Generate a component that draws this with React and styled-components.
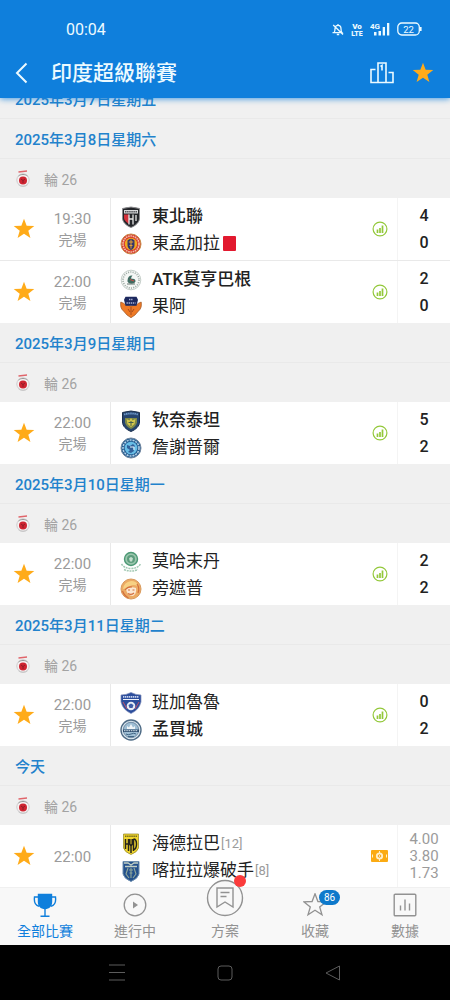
import React from "react";
import styled, { createGlobalStyle, css } from "styled-components";

const color = {
  blue: "#0f7fdc",
  link: "#2282cc",
  star: "#ffab19",
  grey: "#9b9b9b",
  panel: "#f0f0f0",
  line: "#e9e9e9",
  ink: "#222222",
};

const GlobalStyle = createGlobalStyle`
  * { box-sizing: border-box; }
  body {
    margin: 0;
    background: ${color.panel};
    font-family: Roboto, "Noto Sans CJK TC", sans-serif;
    color: ${color.ink};
  }
  button { font: inherit; color: inherit; background: none; border: 0; padding: 0; cursor: pointer; }
  h1, h2, p, ul { margin: 0; padding: 0; font-weight: inherit; font-size: inherit; }
  ul { list-style: none; }
  svg { display: block; flex: none; }
`;

const Screen = styled.div`
  height: 100vh;
  display: flex;
  flex-direction: column;
  overflow: hidden;
`;

/* ---------- header ---------- */

const Header = styled.header`
  position: relative;
  z-index: 2;
  flex: none;
  background: ${color.blue};
  color: #ecfaff;
  box-shadow: 0 1px 6px rgba(15, 127, 220, 0.75);
`;

const StatusBar = styled.div`
  height: 48px;
  padding: 10px 28px 0 66px;
  display: flex;
  align-items: center;
  justify-content: space-between;
  font-size: 16px;
`;

const StatusIcons = styled.div`
  display: flex;
  align-items: center;
  gap: 7px;
`;

const TitleBar = styled.div`
  height: 50px;
  padding: 0 16px 0 15px;
  display: flex;
  align-items: center;
`;

const Title = styled.h1`
  flex: 1;
  margin-left: 22px;
  font-size: 21px;
  line-height: 32px;
  font-weight: 500;
`;

const IconButton = styled.button`
  display: flex;
  align-items: center;
  justify-content: center;
  & + & { margin-left: 18px; }
`;

/* ---------- match list ---------- */

const List = styled.main`
  flex: 1;
  min-height: 0;
  margin-top: -19px;
  overflow: hidden;
`;

const DateRow = styled.h2`
  height: 40px;
  padding: 0 15px;
  display: flex;
  align-items: center;
  background: ${color.panel};
  border-bottom: 1px solid ${color.line};
  color: ${color.link};
  font-size: 15px;
  font-weight: 500;
`;

const RoundRow = styled.p`
  height: 39px;
  padding: 0 14px;
  display: flex;
  align-items: center;
  gap: 12px;
  background: ${color.panel};
  color: #a3a3a3;
  font-size: 14px;
`;

const Matches = styled.ul`
  background: #fff;
  li + li { border-top: 1px solid ${color.line}; }
`;

const Match = styled.li`
  display: grid;
  grid-template-columns: 48px 63px 1fr 52px;
`;

const StarButton = styled.button`
  display: flex;
  align-items: center;
  justify-content: center;
`;

const Kickoff = styled.div`
  height: 62px;
  padding: 2px 13px 0 0;
  display: flex;
  flex-direction: column;
  align-items: center;
  justify-content: center;
  border-right: 1px solid ${color.line};
  color: ${color.grey};
  font-size: 15px;
  line-height: 21px;
  small { font-size: 14px; }
`;

const Body = styled.div`
  display: flex;
  align-items: center;
  justify-content: space-between;
  padding: 0 9px;
  border-right: 1px solid #f4f4f4;
`;

const Teams = styled.div`
  padding-top: 2px;
`;

const Team = styled.div`
  height: 27px;
  display: flex;
  align-items: center;
  font-size: 17px;
  line-height: 27px;
  white-space: nowrap;
  font-weight: ${(p) => (p.$winner ? 500 : 400)};
  svg { margin-right: 10px; }
`;

const Rank = styled.span`
  margin-left: 1px;
  font-size: 13px;
  color: ${color.grey};
`;

const RedCard = styled.span`
  width: 13px;
  height: 15px;
  margin-left: 3px;
  border-radius: 1px;
  background: #e2192f;
`;

const Scores = styled.div`
  display: flex;
  flex-direction: column;
  align-items: center;
  justify-content: center;
  ${(p) =>
    p.$odds
      ? css`
          color: ${color.grey};
          font-size: 15px;
          line-height: 17px;
        `
      : css`
          font-size: 16px;
          line-height: 27px;
          font-weight: 500;
        `}
`;

/* ---------- bottom bars ---------- */

const TabBar = styled.nav`
  position: relative;
  z-index: 1;
  flex: none;
  height: 57px;
  display: grid;
  grid-template: 57px / repeat(5, 1fr);
  background: #f8f8f8;
`;

const Tab = styled.button`
  display: flex;
  flex-direction: column;
  align-items: center;
  justify-content: flex-end;
  padding-bottom: 4px;
  font-size: 14px;
  line-height: 20px;
  color: ${(p) => (p.$active ? color.blue : "#929292")};
`;

const TabIcon = styled.span`
  position: relative;
  margin-bottom: 4px;
`;

const CountBadge = styled.span`
  position: absolute;
  top: -3px;
  left: 16px;
  width: 21px;
  height: 15px;
  border-radius: 8px;
  background: #0e79cb;
  color: #fff;
  font-size: 10px;
  line-height: 15px;
  text-align: center;
`;

const DotBadge = styled.span`
  position: absolute;
  top: -4px;
  right: -2px;
  width: 12px;
  height: 12px;
  border-radius: 50%;
  background: #fb3b3b;
`;

const SystemBar = styled.footer`
  flex: none;
  height: 55px;
  display: flex;
  align-items: center;
  justify-content: center;
  gap: 92px;
  background: #000;
`;

/* ---------- icons ---------- */

const STAR = "M12 .8l2.900 7.700 8.300.3-6.500 5.100 2.300 7.900L12 17.300l-7 4.500 2.300-7.900L.8 8.800l8.300-.3z";

const StarIcon = () => (
  <svg width="22" height="22" viewBox="0 0 24 24">
    <path d={STAR} fill={color.star} />
  </svg>
);

const ChevronIcon = () => (
  <svg width="14" height="22" viewBox="0 0 14 22" fill="none" stroke="currentColor" strokeWidth="2">
    <path d="M11.5 1.5L2 11l9.5 9.5" />
  </svg>
);

const PodiumIcon = () => (
  <svg width="24" height="22" viewBox="0 0 24 22" fill="none" stroke="currentColor" strokeWidth="1.6">
    <path d="M8 20.5V1h8v19.5M5.500 7.500H1v13h22v-10h-4.500M10.500 4.500L12 3.500v5" />
  </svg>
);

const MutedIcon = () => (
  <svg width="12" height="13" viewBox="0 0 12 13" fill="none" stroke="currentColor" strokeWidth="1.3">
    <path d="M2 9.700c1-1 1-2 1-4C3 3.500 4.300 2.300 6 2.300s3 1.200 3 3.400c0 2 0 3 1 4zM6 1v1.500M4.800 11.500h2.400M1.200 2l9.800 9.500M.5 9.700h2" />
  </svg>
);

const VolteIcon = () => (
  <svg width="12" height="15" viewBox="0 0 12 15" fill="currentColor" fontFamily="Roboto" fontWeight="900">
    <text x="6" y="7" fontSize="8" textAnchor="middle">Vo</text>
    <text x="6" y="14" fontSize="7" textAnchor="middle">LTE</text>
  </svg>
);

const SignalIcon = () => (
  <svg width="20" height="14" viewBox="0 0 20 14" fill="currentColor">
    <text x="0" y="7" fontFamily="Roboto" fontWeight="700" fontSize="8">4G</text>
    <path d="M4 10h2.500v3.500H4zM8.500 9H11v4.500H8.500zM12.700 5h2.300v8.500h-2.300zM17 1h2.300v12.500H17z" />
  </svg>
);

const BatteryIcon = () => (
  <svg width="25" height="14" viewBox="0 0 25 14" fill="none" stroke="currentColor" strokeWidth="1.3">
    <rect x="0.800" y="1" width="21.500" height="12" rx="4" />
    <path d="M23.700 5v4" strokeWidth="1.800" />
    <text x="11.500" y="10.500" fontFamily="Roboto" fontSize="9.500" fill="currentColor" stroke="none" textAnchor="middle">22</text>
  </svg>
);

const StatsIcon = () => (
  <svg width="16" height="16" viewBox="0 0 16 16" fill="none" stroke="#93c83a">
    <circle cx="8" cy="8" r="6.900" strokeWidth="1.200" />
    <path d="M5.500 12V8.500M8 12V7M10.500 12V4.500" strokeWidth="1.700" />
  </svg>
);

const TicketIcon = () => (
  <svg width="17" height="12" viewBox="0 0 17 12">
    <rect width="17" height="12" rx="1" fill="#fbab13" />
    <path d="M1.500 4.500v3M15.500 4.500v3" stroke="#fff3cf" />
    <circle cx="8.500" cy="6" r="3.600" fill="#fff0cc" />
    <circle cx="8.500" cy="6" r="1.300" fill="none" stroke="#f2a013" />
    <path d="M8.500 1v2M8.500 9v2" stroke="#fff0cc" />
  </svg>
);

const TrophyIcon = () => (
  <svg width="24" height="24" viewBox="0 0 24 24" fill="none" stroke="currentColor" strokeWidth="1.400">
    <path d="M4.800.8h14.400v8c0 4.400-2.700 7.400-7.200 7.400s-7.200-3-7.200-7.400z" fill="currentColor" stroke="none" />
    <path d="M5 4H1.500c-.5 4 .3 8.300 4.500 9.300M19 4h3.500c.5 4-.3 8.300-4.500 9.300M12 16v7M7.500 23.200h9" />
  </svg>
);

const PlayIcon = () => (
  <svg width="24" height="24" viewBox="0 0 24 24">
    <circle cx="12" cy="12" r="10.800" fill="none" stroke="currentColor" strokeWidth="1.300" />
    <path d="M10 8.500l5 3.500-5 3.500z" fill="currentColor" />
  </svg>
);

const PlanIcon = () => (
  <svg width="38" height="38" viewBox="0 0 38 38" fill="none" stroke="currentColor" strokeWidth="1.400">
    <circle cx="19" cy="19" r="17.500" fill="#f8f8f8" />
    <path d="M11 9h16v19l-8-5-8 5zM14.500 13.500h9M14.500 17.500h6" />
  </svg>
);

const StarOutlineIcon = () => (
  <svg width="24" height="24" viewBox="0 0 24 24" fill="none" stroke="currentColor" strokeWidth="1.300">
    <path d={STAR} />
  </svg>
);

const ChartIcon = () => (
  <svg width="24" height="24" viewBox="0 0 24 24" fill="none" stroke="currentColor" strokeWidth="1.400">
    <rect x="1.200" y="1.200" width="21.600" height="21.600" rx="1" />
    <path d="M7.500 17.500v-5M12 17.500v-11M16.500 17.500v-7" />
  </svg>
);

const MenuKey = () => (
  <svg width="16" height="17" viewBox="0 0 16 17" stroke="#5c5c5c">
    <path d="M0 1h16M0 8.500h16M0 16h16" />
  </svg>
);

const HomeKey = () => (
  <svg width="16" height="16" viewBox="0 0 16 16" fill="none" stroke="#5c5c5c">
    <rect x="1" y="1" width="14" height="14" rx="3" />
  </svg>
);

const BackKey = () => (
  <svg width="16" height="16" viewBox="0 0 16 16" fill="none" stroke="#5c5c5c" strokeLinejoin="round">
    <path d="M14.500 1v14L1 8z" />
  </svg>
);

const LeagueIcon = () => (
  <svg width="18" height="18" viewBox="0 0 18 18">
    <path d="M4.500 2L13 1" stroke="#e0656b" strokeWidth="1.500" />
    <circle cx="9" cy="10" r="6.200" fill="#f6f2f2" stroke="#c4c1c4" strokeWidth=".8" />
    <path d="M4.500 6c2.500-2 6.500-2 9 0" stroke="#999" fill="none" />
    <circle cx="9" cy="10.500" r="4" fill="#cf2431" />
    <path d="M7 9l2 1.500L11 9M9 10.500v2.500" stroke="#7d1a25" strokeWidth=".8" fill="none" />
    <path d="M4.500 14.800c2.500 2 6.500 2 9 0" stroke="#c6c6c6" fill="none" />
  </svg>
);

/* ---------- club crests ---------- */

const SHIELD = "M2.500 2.500Q11 -.5 19.500 2.500V12c0 4-3.500 7.500-8.500 9.500C6 19.500 2.500 16 2.500 12z";

const crests = {
  northeast: (
    <>
      <path d={SHIELD} fill="#24262a" stroke="#8d8d90" />
      <path d="M4 4h14v3.500H4z" fill="#d9dadc" />
      <path d="M5 5.800h12" stroke="#55565a" strokeWidth="1.500" strokeDasharray="1.500 .6" />
      <path d="M4 8.500h5v9.500c-3-2-5-4-5-6z" fill="#d4323c" />
      <path d="M9 8.500v10M13 8.500v10M9 13h4M16 9v6" stroke="#e8e8e8" strokeWidth="1.300" />
    </>
  ),
  eastBengal: (
    <>
      <circle cx="11" cy="11" r="10" fill="#d8352f" stroke="#c98b48" />
      <circle cx="11" cy="11" r="8" fill="none" stroke="#f1c4a5" strokeWidth="1.600" strokeDasharray="1.600 .7" />
      <circle cx="11" cy="11" r="6.200" fill="#f1a81f" />
      <path d="M7.500 7.500Q11 4 14.500 7.500V12q0 3.500-3.500 5-3.500-1.500-3.500-5z" fill="#34366c" />
      <path d="M11 6.500v9M8.800 9h4.400M9.500 12.500h3" stroke="#e5a13a" />
    </>
  ),
  mohunBagan: (
    <>
      <circle cx="11" cy="11" r="9.800" fill="#f5f7f5" stroke="#c7d0cb" />
      <circle cx="11" cy="11" r="8" fill="none" stroke="#9aa7a1" strokeWidth="1.600" strokeDasharray="1 1.300" />
      <path d="M7.500 11.500Q8 6 12.500 6.500q-2 1.500-1 3.500c3-.5 4 .5 4 2.500-1.500 3-6.500 3-8 0z" fill="#3f6c61" />
      <path d="M10 10.500l4 1.500" stroke="#c24c46" strokeWidth="1.300" />
      <path d="M7 15h8" stroke="#66756e" />
    </>
  ),
  goa: (
    <>
      <path d="M.8 6q3 1 5 3l5.200 1 5.200-1q2-2 5-3 1 6-2.700 9l-3.500 4-4 2.700L7 19l-3.500-4Q-.2 12 .8 6z" fill="#ee7a26" stroke="#9c5424" strokeWidth=".7" />
      <path d="M5.500 .8h11l1.500 3-1.500 6h-11L4 3.800z" fill="#1c285e" />
      <path d="M6.500 7h9M9 3.500h4" stroke="#a9b1d5" strokeWidth="1.600" strokeDasharray="1.400 .7" />
      <path d="M11 11v8M8 13l2 3M14 13l-2 3" stroke="#a74c1e" />
    </>
  ),
  chennaiyin: (
    <>
      <path d={SHIELD} fill="#26456f" stroke="#1b304e" />
      <path d="M4 4.500q7-2 14 0" stroke="#6f99ca" strokeWidth="1.800" fill="none" strokeDasharray="1.500 .6" />
      <path d="M5 8h12v4.500q-1 4-6 6.500-5-2.500-6-6.500z" fill="#7d8948" />
      <path d="M6.500 9l3 1.500L11 8l1.500 2.500 3-1.500-1 5-3.500 3-3.500-3z" fill="#d6c94b" />
      <path d="M8.500 12.500h5M11 11v5" stroke="#46614e" />
    </>
  ),
  jamshedpur: (
    <>
      <circle cx="11" cy="11" r="10" fill="#275f93" stroke="#70869f" />
      <circle cx="11" cy="11" r="8" fill="none" stroke="#b7d2e7" strokeWidth="1.500" strokeDasharray="2 1" />
      <circle cx="11" cy="11" r="6.300" fill="#68bde6" />
      <path d="M7 8l3 1 3-2 2 2-2 2 1 3-3 2-3-1 2-2-3-2z" fill="#315f99" />
      <path d="M10 10h4v3" stroke="#e3f1f8" fill="none" />
    </>
  ),
  mohammedan: (
    <>
      <circle cx="11" cy="8" r="6.500" fill="#9bc7ad" stroke="#4c9875" strokeWidth="1.400" />
      <circle cx="11" cy="8" r="4" fill="#5d9d7e" />
      <path d="M9 7.500q2-3 4 0l-1 3h-2z" fill="#c5dfcf" />
      <path d="M1.500 13q3 4.500 9.500 4.500T20.500 13M4 18.500q7 3 14 0" fill="none" stroke="#a3c9b4" strokeWidth="1.500" strokeDasharray="2 .8" />
    </>
  ),
  punjab: (
    <>
      <circle cx="11" cy="11" r="10" fill="#ecab64" stroke="#d99a5d" />
      <path d="M3 11q1-7 8-8 6 0 7 5-5-2-8 0-3 3-7 3z" fill="#f7d184" />
      <path d="M6 11q5-3 10-1 1 5-3 8-6 0-7-7z" fill="#fbe7d2" />
      <path d="M5 12q3-4 7-3M8 12h2M12.500 12h2M8 15.500q3 2 6-.5M2.500 13q2 5 6 7M17 6q3 4 1 9" fill="none" stroke="#d36f3d" strokeWidth="1.200" />
    </>
  ),
  bengaluru: (
    <>
      <path d="M1 3q5 0 10-2.500Q16 3 21 3v7q-2 8-10 11.500Q3 18 1 10z" fill="#2b4d9c" stroke="#7d8bb8" strokeWidth=".7" />
      <path d="M3 4.800h16" stroke="#c9d4ee" strokeWidth="1.800" strokeDasharray="1.400 .6" />
      <path d="M3 7.500h16" stroke="#f0f3fa" />
      <circle cx="11" cy="14" r="4.300" fill="#e7ebf4" />
      <path d="M8.500 13l2.500-1.500 2.500 1.500-1 3h-3z" fill="#3d5da8" />
      <path d="M3 10l4 7M19 10l-4 7" stroke="#d65464" strokeWidth=".9" />
    </>
  ),
  mumbai: (
    <>
      <circle cx="11" cy="11" r="10" fill="#d9e6ee" stroke="#4f6c86" strokeWidth="1.400" />
      <circle cx="11" cy="11" r="7.700" fill="#9fbfd5" stroke="#738da5" />
      <path d="M3 10.500h16v2.500H3z" fill="#2f4f70" />
      <path d="M4 11.700h14" stroke="#dce8ef" strokeDasharray="1.500 .8" />
      <path d="M7 10V7l2 1.500L11 5l2 3.500L15 7v3z" fill="#f1f5f7" />
      <path d="M6 15q2 1.500 5 0t5 0M8 17.500h6" stroke="#426785" fill="none" />
    </>
  ),
  hyderabad: (
    <>
      <path d="M3.500 1h15v14q-1 4-7.500 6.500Q4.500 19 3.500 15z" fill="#f0d52d" stroke="#8e8325" strokeWidth=".7" />
      <path d="M5 3.200h12" stroke="#766d20" strokeWidth="1.500" strokeDasharray="1.500 .6" />
      <path d="M5.500 6v10M8.500 6v12M5.500 11h3M9.800 6v5l1.200 2 1.200-2V6M11 13v7M13.500 6v12M13.500 6q3 0 3 5t-3 6" stroke="#25241d" strokeWidth="1.500" fill="none" />
    </>
  ),
  kerala: (
    <>
      <path d="M3 1.500h16V14q-1 4.500-8 7.500-7-3-8-7.500z" fill="#24518b" stroke="#6d8eaf" />
      <path d="M4 3h4l3 2 3-2h4M5 6.500h12" fill="none" stroke="#c2d0c5" strokeWidth="1.300" />
      <path d="M8 8l-2 6 3 4M14 8l2 6-3 4M9 10h4M9.500 13h3M11 8v10" fill="none" stroke="#91a89b" strokeWidth="1.100" />
    </>
  ),
};

const Crest = ({ club }) => (
  <svg width="22" height="22" viewBox="0 0 22 22" fill="none">
    {crests[club]}
  </svg>
);

/* ---------- data ---------- */

const days = [
  {
    date: "2025年3月8日星期六",
    matches: [
      {
        time: "19:30",
        teams: [
          { club: "northeast", name: "東北聯", winner: true },
          { club: "eastBengal", name: "東孟加拉", redCard: true },
        ],
        scores: [4, 0],
      },
      {
        time: "22:00",
        teams: [
          { club: "mohunBagan", name: "ATK莫亨巴根", winner: true },
          { club: "goa", name: "果阿" },
        ],
        scores: [2, 0],
      },
    ],
  },
  {
    date: "2025年3月9日星期日",
    matches: [
      {
        time: "22:00",
        teams: [
          { club: "chennaiyin", name: "钦奈泰坦", winner: true },
          { club: "jamshedpur", name: "詹謝普爾" },
        ],
        scores: [5, 2],
      },
    ],
  },
  {
    date: "2025年3月10日星期一",
    matches: [
      {
        time: "22:00",
        teams: [
          { club: "mohammedan", name: "莫哈末丹" },
          { club: "punjab", name: "旁遮普" },
        ],
        scores: [2, 2],
      },
    ],
  },
  {
    date: "2025年3月11日星期二",
    matches: [
      {
        time: "22:00",
        teams: [
          { club: "bengaluru", name: "班加魯魯" },
          { club: "mumbai", name: "孟買城", winner: true },
        ],
        scores: [0, 2],
      },
    ],
  },
  {
    date: "今天",
    matches: [
      {
        time: "22:00",
        teams: [
          { club: "hyderabad", name: "海德拉巴", rank: 12 },
          { club: "kerala", name: "喀拉拉爆破手", rank: 8 },
        ],
        odds: ["4.00", "3.80", "1.73"],
      },
    ],
  },
];

const MatchItem = ({ match }) => (
  <Match>
    <StarButton aria-label="收藏">
      <StarIcon />
    </StarButton>
    <Kickoff>
      <time>{match.time}</time>
      {match.scores && <small>完場</small>}
    </Kickoff>
    <Body>
      <Teams>
        {match.teams.map((team) => (
          <Team key={team.club} $winner={team.winner}>
            <Crest club={team.club} />
            {team.name}
            {team.rank && <Rank>[{team.rank}]</Rank>}
            {team.redCard && <RedCard />}
          </Team>
        ))}
      </Teams>
      {match.odds ? <TicketIcon /> : <StatsIcon />}
    </Body>
    <Scores $odds={Boolean(match.odds)}>
      {(match.odds || match.scores).map((value, i) => (
        <span key={i}>{value}</span>
      ))}
    </Scores>
  </Match>
);

export default function App() {
  return (
    <Screen>
      <GlobalStyle />
      <Header>
        <StatusBar>
          <time>00:04</time>
          <StatusIcons>
            <MutedIcon />
            <VolteIcon />
            <SignalIcon />
            <BatteryIcon />
          </StatusIcons>
        </StatusBar>
        <TitleBar>
          <IconButton aria-label="返回">
            <ChevronIcon />
          </IconButton>
          <Title>印度超級聯賽</Title>
          <IconButton aria-label="排名">
            <PodiumIcon />
          </IconButton>
          <IconButton aria-label="收藏">
            <StarIcon />
          </IconButton>
        </TitleBar>
      </Header>

      <List>
        <DateRow>2025年3月7日星期五</DateRow>
        {days.map((day) => (
          <section key={day.date}>
            <DateRow>{day.date}</DateRow>
            <RoundRow>
              <LeagueIcon />
              輪 26
            </RoundRow>
            <Matches>
              {day.matches.map((match) => (
                <MatchItem key={match.teams[0].club} match={match} />
              ))}
            </Matches>
          </section>
        ))}
      </List>

      <TabBar>
        <Tab $active>
          <TabIcon><TrophyIcon /></TabIcon>
          全部比賽
        </Tab>
        <Tab>
          <TabIcon><PlayIcon /></TabIcon>
          進行中
        </Tab>
        <Tab>
          <TabIcon>
            <PlanIcon />
            <DotBadge />
          </TabIcon>
          方案
        </Tab>
        <Tab>
          <TabIcon>
            <StarOutlineIcon />
            <CountBadge>86</CountBadge>
          </TabIcon>
          收藏
        </Tab>
        <Tab>
          <TabIcon><ChartIcon /></TabIcon>
          數據
        </Tab>
      </TabBar>

      <SystemBar>
        <MenuKey />
        <HomeKey />
        <BackKey />
      </SystemBar>
    </Screen>
  );
}
